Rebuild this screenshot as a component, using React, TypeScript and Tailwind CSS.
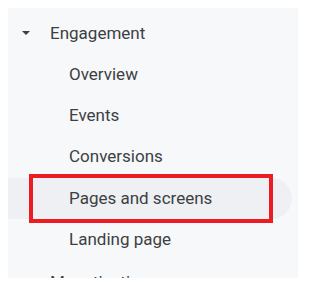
const items = ['Overview', 'Events', 'Conversions', 'Pages and screens', 'Landing page'];

function Caret({ faint }: { faint?: boolean }) {
  return (
    <svg width="10" height="6" viewBox="0 0 10 6" className="shrink-0">
      <path d="M1 1 L9 1 L5 5 Z" fill={faint ? '#c4c7cc' : '#3c4043'} />
    </svg>
  );
}

export default function App() {
  return (
    <div className="w-[322px] h-[292px] bg-white p-2" style={{ fontFamily: 'Roboto, "Liberation Sans", sans-serif' }}>
      <div className="relative w-[290px] h-[270px] bg-[#f7f8fa] overflow-hidden pt-[4.75px]">
        <div className="flex items-center h-[41.25px] pl-[13px] text-[17px] text-[#3c4043]">
          <Caret />
          <span className="ml-[19px]">Engagement</span>
        </div>
        {items.map((label) => (
          <div
            key={label}
            className={
              label === 'Pages and screens'
                ? 'flex items-center h-[41.25px] pl-[61px] mr-[6px] rounded-r-full bg-[#eef0f3] text-[17px] text-[#3c4043]'
                : 'flex items-center h-[41.25px] pl-[61px] text-[17px] text-[#3c4043]'
            }
          >
            {label}
          </div>
        ))}
        <div className="flex items-center h-[41.25px] mt-[2px] pl-[13px] text-[17px] text-[#3c4043]">
          <Caret faint />
          <span className="ml-[19px]">Monetization</span>
        </div>
        <div className="absolute left-[21px] top-[166px] w-[244px] h-[49px] border-4 border-[#ed1c24]" />
      </div>
    </div>
  );
}
